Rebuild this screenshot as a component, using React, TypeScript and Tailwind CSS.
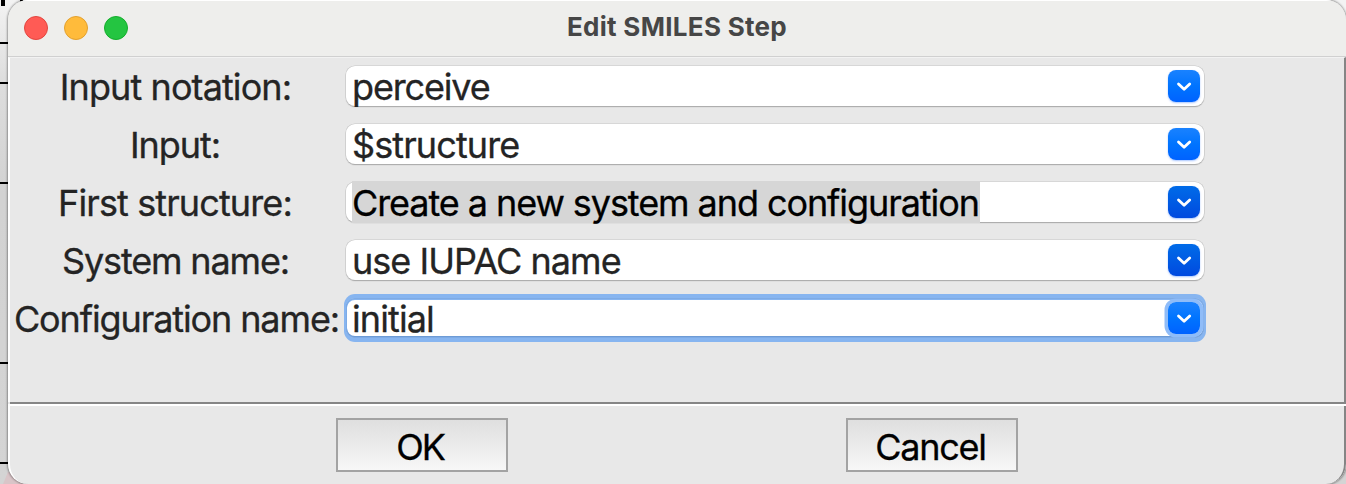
import { ReactNode } from "react";

type Row = {
  label: string;
  value: string;
  labelClass: string;
  valueClass: string;
  dark?: boolean;
  selected?: boolean;
  focused?: boolean;
};

const rows: Row[] = [
  { label: "Input notation:", value: "perceive", labelClass: "tracking-[-0.9px] pr-[5px]", valueClass: "tracking-[-1.15px]" },
  { label: "Input:", value: "$structure", labelClass: "tracking-[-1.05px] pr-[6px]", valueClass: "tracking-[-0.9px]" },
  { label: "First structure:", value: "Create a new system and configuration", labelClass: "tracking-[-0.88px] pr-[6px]", valueClass: "tracking-[-1.08px]", dark: true, selected: true },
  { label: "System name:", value: "use IUPAC name", labelClass: "tracking-[-1.15px] pr-[5px]", valueClass: "tracking-[-0.97px]", dark: true },
  { label: "Configuration name:", value: "initial", labelClass: "tracking-[-1.11px] pr-[3px]", valueClass: "tracking-[-0.9px]", focused: true },
];

function Arrow({ dark, focused }: { dark?: boolean; focused?: boolean }) {
  const tone = dark ? "from-[#006be8] to-[#0049df]" : "from-[#1982ff] via-[#0074ff] to-[#0062ff]";
  const halo = focused ? "shadow-[0_0_0_3.5px_#8fbcf8]" : "shadow-[0_1px_2px_rgba(0,90,255,0.35)]";
  return (
    <span className={`mr-1 flex size-8 shrink-0 items-center justify-center rounded-[8px] bg-linear-to-b ${tone} ${halo}`}>
      <svg width="32" height="32" viewBox="0 0 32 32" fill="none" stroke="white" strokeWidth="2.8" strokeLinecap="round" strokeLinejoin="round">
        <path d="M10.5 13.9 L16.1 19.3 L21.7 13.9" />
      </svg>
    </span>
  );
}

function Combo({ row }: { row: Row }) {
  const frame = row.focused
    ? "shadow-[0_2px_0_2px_#87b5f0,0_-2px_0_2px_#87b5f0,inset_0_0_0_1px_#7eabe5,inset_0_-1px_0_1px_#6d9bd6,inset_0_1px_0_1px_#87b5f0]"
    : "shadow-[0_0_0_0.6px_#c6c6c6,0_1px_1px_#8d8d8d]";
  return (
    <div className={`flex h-10 w-[858px] items-center rounded-[9px] bg-white ${frame}`}>
      <div className="flex flex-1 items-center pl-1.5">
        <span className={`h-[42px] whitespace-pre leading-[44px] ${row.selected ? "w-[628px] bg-[#d6d6d6] text-black" : ""} ${row.valueClass}`}>
          {row.value}
        </span>
      </div>
      <Arrow dark={row.dark} focused={row.focused} />
    </div>
  );
}

function PushButton({ children }: { children: ReactNode }) {
  return (
    <button className="flex h-[54px] w-[172px] items-center justify-center border-2 border-[#a3a3a3] bg-linear-to-b from-[#dfdfdf] to-[#f7f7f7] pt-1 pr-[3px] text-black">
      {children}
    </button>
  );
}

function Backdrop() {
  return (
    <svg className="absolute inset-0" width="1346" height="484">
      <defs>
        <linearGradient id="desk" x1="0" y1="0" x2="0" y2="1">
          <stop offset="0" stopColor="#f3f3f3" />
          <stop offset="0.17" stopColor="#dddddd" />
          <stop offset="0.4" stopColor="#d2d2d2" />
          <stop offset="1" stopColor="#d4d4d4" />
        </linearGradient>
      </defs>
      <rect width="1346" height="484" fill="url(#desk)" />
      <rect x="1300" width="46" height="40" fill="#f3f3f3" />
      <path d="M1 0h4v6H1zM20 0h3v2h-3zM0 42h9v2H0zM0 82h9v2H0zM0 182h9v2H0zM0 362h9v2H0zM0 462h9v2H0z" fill="black" />
      <path d="M8 472L3 484H24L14 474z" fill="#d9c5c8" />
    </svg>
  );
}

export default function App() {
  return (
    <main className="relative h-[484px] w-[1346px] overflow-hidden pl-2 font-['Inter','Liberation_Sans',sans-serif] text-[36px] text-[#242424] [-webkit-text-stroke:0.3px]">
      <Backdrop />
      <section className="relative flex h-[484px] flex-col overflow-hidden rounded-[20px] bg-[#e8e8e8] shadow-[0_0_2px_1px_rgba(0,0,0,0.35)]">
        <header className="flex h-[57px] shrink-0 items-center border-t border-b border-t-white border-b-[#d0d0d0] bg-[#eeeeec] pb-0.5">
          <div className="flex w-[400px] gap-4 pl-4">
            <span className="size-6 rounded-full border border-[#e2463f] bg-[#ff5b55]" />
            <span className="size-6 rounded-full border border-[#e2a02f] bg-[#ffbb3b]" />
            <span className="size-6 rounded-full border border-[#14ad2c] bg-[#24c541]" />
          </div>
          <h1 className="w-[538px] pb-0.5 text-center text-[26px] leading-8 font-bold tracking-[0.3px] text-[#464646] [-webkit-text-stroke:0px]">Edit SMILES Step</h1>
        </header>
        <div className="flex h-[345px] shrink-0 flex-col gap-[18px] border-t border-r-2 border-l-2 border-t-[#f2f2f2] border-r-[#858585] border-l-white pt-2">
          {rows.map((row) => (
            <div key={row.label} className="flex h-10 items-center">
              <div className={`mt-0.5 flex w-[336px] justify-center leading-10 whitespace-nowrap ${row.labelClass}`}>{row.label}</div>
              <Combo row={row} />
            </div>
          ))}
        </div>
        <div className="ml-0.5 h-0.5 shrink-0 bg-[#858585]" />
        <div className="h-0.5 shrink-0 bg-white" />
        <footer className="flex flex-1 gap-[338px] rounded-b-[20px] border-r-2 border-l-2 border-r-[#858585] border-l-white pt-3 pl-[326px]">
          <PushButton><span className="mr-px tracking-[-2px]">OK</span></PushButton>
          <PushButton><span className="tracking-[-1.3px]">Cancel</span></PushButton>
        </footer>
      </section>
    </main>
  );
}
